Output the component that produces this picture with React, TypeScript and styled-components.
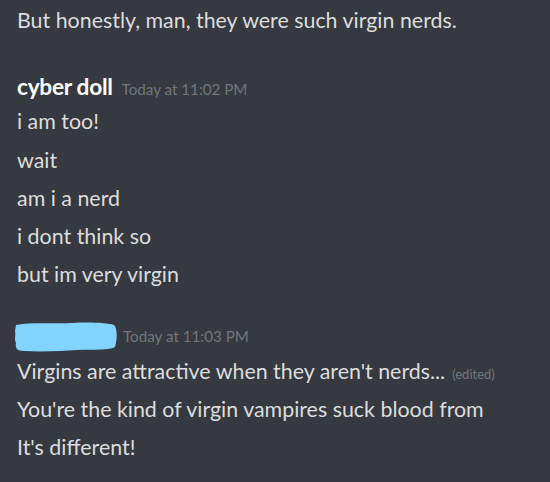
import React from "react";
import styled, { createGlobalStyle } from "styled-components";

const Global = createGlobalStyle`
  html, body { margin: 0; padding: 0; background: #36393f; }
  body { font-family: Lato, "Open Sans", sans-serif; }
`;

const Chat = styled.div`
  width: 550px;
  height: 482px;
  overflow: hidden;
  background: #36393f;
  padding: 1px 0 0 17px;
  box-sizing: border-box;
  display: flex;
  flex-direction: column;
`;

const Group = styled.section<{ $gap: number }>`
  display: flex;
  flex-direction: column;
  margin-top: ${(p) => p.$gap}px;
`;

const Header = styled.div`
  display: flex;
  align-items: baseline;
  gap: 9px;
  height: 31px;
  line-height: 31px;
`;

const Name = styled.span`
  font-size: 22.7px;
  font-weight: 700;
  color: #ffffff;
  letter-spacing: -0.3px;
`;

const Blob = styled.svg`
  width: 106px;
  height: 31px;
  margin-left: -5px;
  margin-right: -4px;
  align-self: center;
  display: block;
`;

const Stamp = styled.span`
  font-size: 15.2px;
  color: #72767d;
`;

const Line = styled.div`
  font-size: 21.4px;
  line-height: 38.25px;
  color: #dcddde;
  white-space: nowrap;
`;

const Edited = styled.span`
  font-size: 13px;
  line-height: 0;
  color: #72767d;
  margin-left: 7px;
`;

export default function App() {
  return (
    <Chat>
      <Global />
      <Group $gap={0}>
        <Line>But honestly, man, they were such virgin nerds.</Line>
      </Group>
      <Group $gap={32}>
        <Header>
          <Name>cyber doll</Name>
          <Stamp>Today at 11:02 PM</Stamp>
        </Header>
        <Line>i am too!</Line>
        <Line>wait</Line>
        <Line>am i a nerd</Line>
        <Line>i dont think so</Line>
        <Line>but im very virgin</Line>
      </Group>
      <Group $gap={27}>
        <Header>
          <Blob viewBox="0 0 106 31">
            <path
              d="M4 4 C20 1 40 3 60 2 C80 1 95 2 102 4 C106 8 105 20 103 26 C95 30 80 28 65 29 C50 30 30 31 12 30 C5 30 3 27 4 22 C2 18 4 14 3 10 Z"
              fill="#80d4ff"
            />
          </Blob>
          <Stamp>Today at 11:03 PM</Stamp>
        </Header>
        <Line>
          Virgins are attractive when they aren't nerds...<Edited>(edited)</Edited>
        </Line>
        <Line>You're the kind of virgin vampires suck blood from</Line>
        <Line>It's different!</Line>
      </Group>
    </Chat>
  );
}
